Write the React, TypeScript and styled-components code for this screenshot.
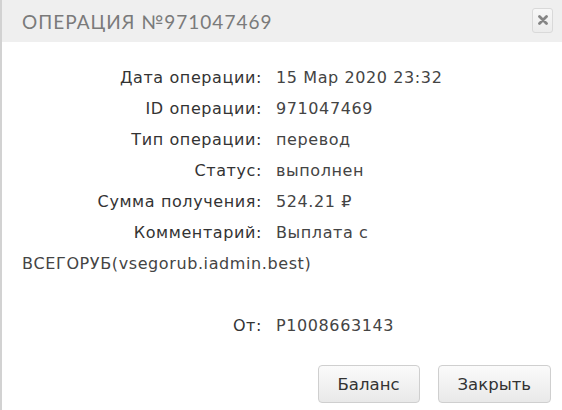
import React from "react";
import styled, { createGlobalStyle } from "styled-components";

const Global = createGlobalStyle`
  html, body { margin: 0; padding: 0; background: #ffffff; }
  body { width: 562px; height: 410px; overflow: hidden; }
`;

const Dialog = styled.div`
  box-sizing: border-box;
  width: 562px;
  height: 410px;
  border-left: 2px solid #d2d2d2;
  background: #ffffff;
  display: flex;
  flex-direction: column;
`;

const Header = styled.div`
  height: 42px;
  flex: none;
  background: #efefef;
  display: flex;
  align-items: center;
  justify-content: space-between;
  padding: 0 9px 0 20px;
`;

const Title = styled.h1`
  margin: 0;
  font-family: Lato, "Liberation Sans", sans-serif;
  font-weight: 400;
  font-size: 19px;
  letter-spacing: 1px;
  color: #7a7a7a;
  padding-top: 1px;
`;

const CloseButton = styled.button`
  box-sizing: border-box;
  width: 21px;
  height: 25px;
  margin-top: -2px;
  padding: 0;
  border: 1px solid #d9d9d9;
  border-radius: 3px;
  background: linear-gradient(#f7f7f7, #ececec);
  display: flex;
  align-items: center;
  justify-content: center;
  cursor: pointer;
`;

const Content = styled.div`
  padding: 20px 14px 0 20px;
  font-family: "DejaVu Sans", "Liberation Sans", sans-serif;
  font-size: 16px;
  line-height: 31px;
  letter-spacing: 0.6px;
  color: #444;
`;

const Line = styled.div<{ $gapBefore?: boolean }>`
  margin-top: ${(p) => (p.$gapBefore ? "31px" : "0")};
`;

const Label = styled.span`
  display: inline-block;
  width: 240px;
  text-align: right;
  color: #333;
  margin-right: 14px;
`;

const Value = styled.span`
  color: #444;
`;

const Footer = styled.div`
  margin-top: auto;
  display: flex;
  justify-content: flex-end;
  gap: 18px;
  padding: 0 11px 7px 0;
`;

const Button = styled.button`
  box-sizing: border-box;
  height: 38px;
  padding: 0 19px;
  border: 1px solid #cfcfcf;
  border-radius: 4px;
  background: linear-gradient(#fbfbfb, #e9e9e9);
  font-family: "DejaVu Sans", Verdana, sans-serif;
  font-size: 16.5px;
  color: #333;
  cursor: pointer;
`;

const rows: [string, string[]][] = [
  ["Дата операции:", ["15 Мар 2020 23:32"]],
  ["ID операции:", ["971047469"]],
  ["Тип операции:", ["перевод"]],
  ["Статус:", ["выполнен"]],
  ["Сумма получения:", ["524.21 ₽"]],
  ["Комментарий:", ["Выплата с ", "ВСЕГОРУБ(vsegorub.iadmin.best)"]],
];

export default function App() {
  return (
    <>
      <Global />
      <Dialog>
        <Header>
          <Title>ОПЕРАЦИЯ №971047469</Title>
          <CloseButton aria-label="close">
            <svg width="10" height="10" viewBox="0 0 10 10">
              <path d="M1.5 1.5 L8.5 8.5 M8.5 1.5 L1.5 8.5" stroke="#858585" strokeWidth="2.8" strokeLinecap="round" />
            </svg>
          </CloseButton>
        </Header>
        <Content>
          {rows.map(([l, parts]) => (
            <Line key={l}>
              <Label>{l}</Label>
              {parts.map((p) => (
                <Value key={p}>{p}</Value>
              ))}
            </Line>
          ))}
          <Line $gapBefore>
            <Label>От:</Label>
            <Value>P1008663143</Value>
          </Line>
        </Content>
        <Footer>
          <Button>Баланс</Button>
          <Button>Закрыть</Button>
        </Footer>
      </Dialog>
    </>
  );
}
